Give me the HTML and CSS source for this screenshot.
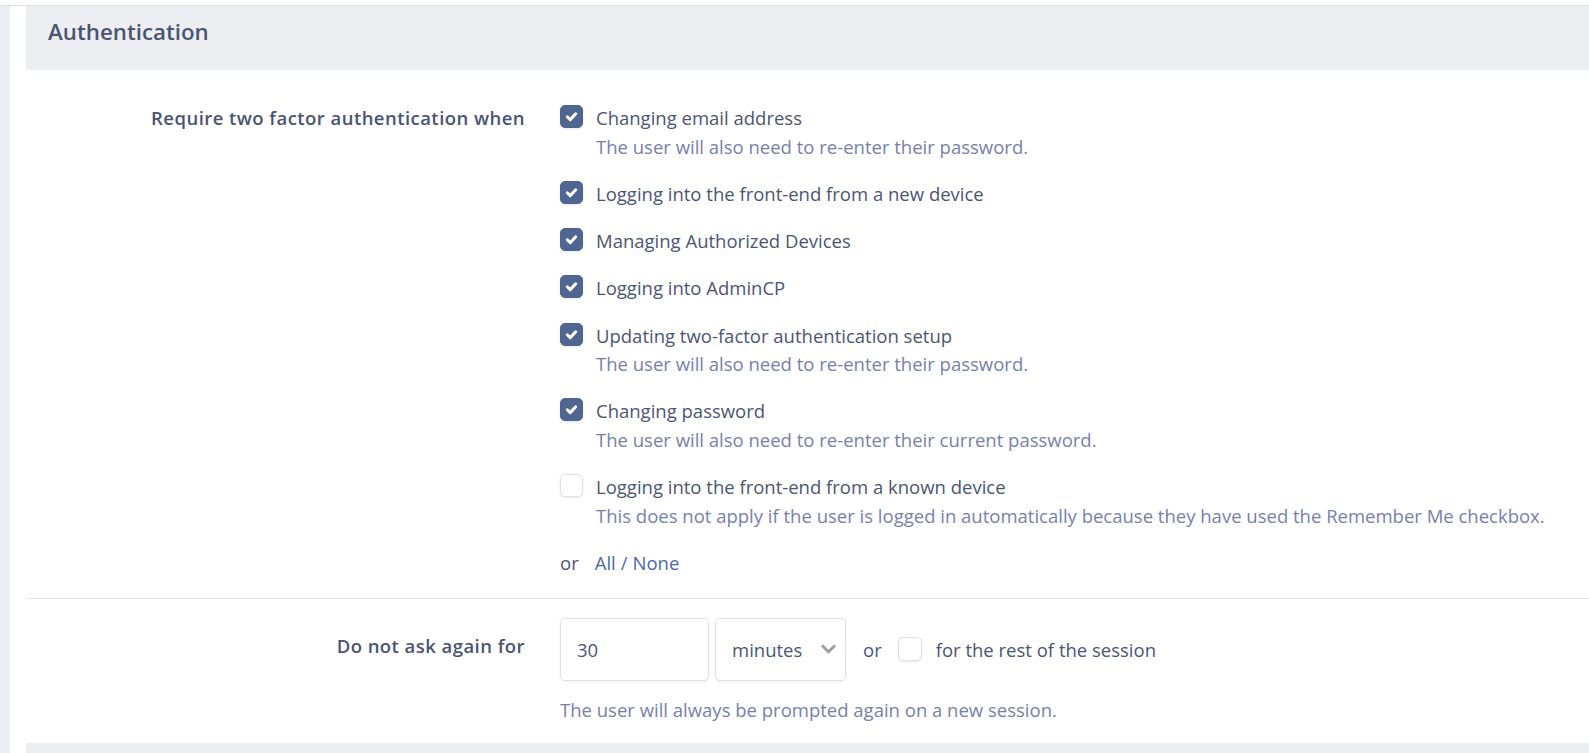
FILE: index.html
```html
<!DOCTYPE html>
<html>
<head>
<meta charset="utf-8">
<link rel="stylesheet" href="styles.css">
</head>
<body>
<div class="page">
  <div class="side"></div>
  <div class="main">
    <div class="block">
      <h2 class="block-header">Authentication</h2>
      <div class="block-body">
        <div class="form-row first">
          <div class="row-label">Require two factor authentication when</div>
          <div class="row-input">
            <ul class="choices">
              <li class="choice">
                <span class="cb checked"><svg viewBox="0 0 12 12"><path d="M2.6 6.2 L5 8.5 L9.4 3.8"/></svg></span>
                <div class="choice-text"><div class="choice-label">Changing email address</div><div class="hint">The user will also need to re-enter their password.</div></div>
              </li>
              <li class="choice">
                <span class="cb checked"><svg viewBox="0 0 12 12"><path d="M2.6 6.2 L5 8.5 L9.4 3.8"/></svg></span>
                <div class="choice-text"><div class="choice-label">Logging into the front-end from a new device</div></div>
              </li>
              <li class="choice">
                <span class="cb checked"><svg viewBox="0 0 12 12"><path d="M2.6 6.2 L5 8.5 L9.4 3.8"/></svg></span>
                <div class="choice-text"><div class="choice-label">Managing Authorized Devices</div></div>
              </li>
              <li class="choice">
                <span class="cb checked"><svg viewBox="0 0 12 12"><path d="M2.6 6.2 L5 8.5 L9.4 3.8"/></svg></span>
                <div class="choice-text"><div class="choice-label">Logging into AdminCP</div></div>
              </li>
              <li class="choice">
                <span class="cb checked"><svg viewBox="0 0 12 12"><path d="M2.6 6.2 L5 8.5 L9.4 3.8"/></svg></span>
                <div class="choice-text"><div class="choice-label">Updating two-factor authentication setup</div><div class="hint">The user will also need to re-enter their password.</div></div>
              </li>
              <li class="choice">
                <span class="cb checked"><svg viewBox="0 0 12 12"><path d="M2.6 6.2 L5 8.5 L9.4 3.8"/></svg></span>
                <div class="choice-text"><div class="choice-label">Changing password</div><div class="hint">The user will also need to re-enter their current password.</div></div>
              </li>
              <li class="choice">
                <span class="cb"></span>
                <div class="choice-text"><div class="choice-label">Logging into the front-end from a known device</div><div class="hint">This does not apply if the user is logged in automatically because they have used the Remember Me checkbox.</div></div>
              </li>
              <li class="choice all-none">
                <span class="or">or</span><a class="link">All</a><span class="slash">/</span><a class="link">None</a>
              </li>
            </ul>
          </div>
        </div>
        <div class="form-row second">
          <div class="row-label label-input">Do not ask again for</div>
          <div class="row-input">
            <div class="input-line">
              <div class="text-input">30</div>
              <div class="select">minutes<svg class="chev" viewBox="0 0 16 10"><path d="M2 2 L8 8 L14 2"/></svg></div>
              <span class="or2">or</span>
              <span class="cb small"></span>
              <span class="session">for the rest of the session</span>
            </div>
            <div class="hint explain">The user will always be prompted again on a new session.</div>
          </div>
        </div>
      </div>
      <div class="block-footer"></div>
    </div>
  </div>
</div>
</body>
</html>
```
FILE: styles.css
```css
* { box-sizing: border-box; }
html, body { margin: 0; padding: 0; background: #fff; }
body {
  font-family: "Open Sans", "Noto Sans", sans-serif;
  font-size: 18.5px;
  color: #4b5574;
  overflow: hidden;
  height: 753px;
}
.page {
  display: flex;
  margin-top: 5px;
  border-top: 1px solid #dcdde4;
  height: 748px;
}
.side {
  width: 10px;
  flex: none;
  background: #edeef2;
}
.main {
  flex: 1;
  padding-left: 16px;
}
.block-header {
  margin: 0;
  height: 64px;
  background: #edeef2;
  font-size: 22.3px;
  font-weight: 600;
  color: #4a5573;
  padding: 0 22px 13px;
  display: flex;
  align-items: center;
}
.form-row {
  display: grid;
  grid-template-columns: 534px 1fr;
}
.form-row.first {
  padding: 34px 0 20px;
  border-bottom: 1px solid #e6e7ec;
}
.form-row.second {
  padding: 19px 0 19px;
}
.row-label {
  text-align: right;
  padding-right: 35px;
  font-weight: 600;
  letter-spacing: 0.45px;
  color: #4a5472;
  line-height: 28px;
}
.label-input { padding-top: 14px; }
.choices {
  list-style: none;
  margin: 0;
  padding: 0;
  display: flex;
  flex-direction: column;
  gap: 18.8px;
}
.choice {
  display: flex;
  align-items: flex-start;
  line-height: 28.5px;
}
.cb {
  width: 23px;
  height: 23px;
  flex: none;
  border-radius: 5px;
  border: 1px solid #dfe1ea;
  background: #fff;
  box-shadow: 0 1px 3px rgba(60, 70, 110, 0.12);
  margin-top: 1px;
  margin-right: 13px;
  display: flex;
  align-items: center;
  justify-content: center;
}
.cb.checked {
  background: #506590;
  border-color: #506590;
}
.cb svg { width: 15px; height: 15px; }
.cb path { fill: none; stroke: #fff; stroke-width: 2.4; stroke-linecap: round; stroke-linejoin: round; }
.choice-label { color: #4b5574; }
.hint { color: #7681ab; }
.all-none { color: #4b5574; }
.or { margin-right: 16px; }
.link { color: #4c69a5; text-decoration: none; }
.slash { color: #4c69a5; margin: 0 5px; }
.input-line {
  display: flex;
  align-items: center;
  gap: 6px;
}
.text-input, .select {
  height: 63px;
  border: 1px solid #dfe1ea;
  border-radius: 5px;
  box-shadow: 0 1px 3px rgba(60, 70, 110, 0.08);
  display: flex;
  align-items: center;
  color: #4b5574;
  padding: 0 16px;
}
.text-input { width: 149px; }
.select { width: 131px; justify-content: space-between; padding-right: 9px; }
.chev { width: 15px; height: 10px; flex: none; }
.chev path { fill: none; stroke: #9a9ea8; stroke-width: 3.2; stroke-linecap: round; stroke-linejoin: round; }
.or2 { margin-left: 11px; margin-right: 10px; }
.cb.small { margin: 0 8px 0 0; width: 24px; height: 24px; }
.explain { margin-top: 15px; line-height: 28px; }
.block-footer {
  height: 20px;
  background: #edeef2;
}
```
